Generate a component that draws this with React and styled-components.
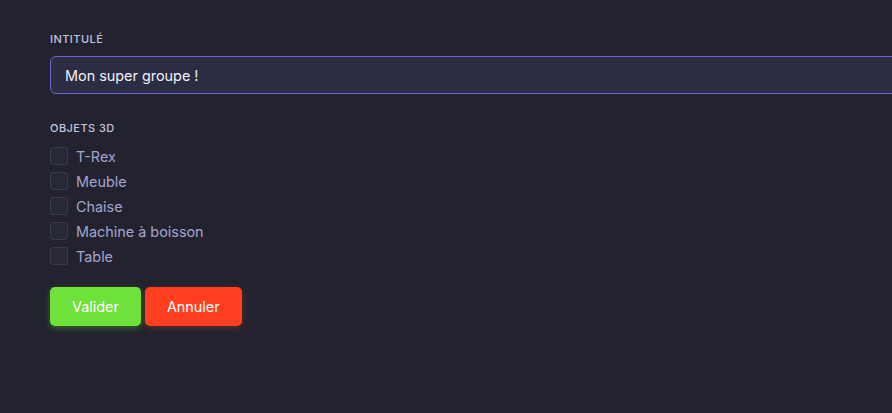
import React, { useState } from "react";
import styled, { createGlobalStyle } from "styled-components";

const GlobalStyle = createGlobalStyle`
  html, body {
    margin: 0;
    padding: 0;
    background: #23232f;
    font-family: Inter, "Noto Sans", sans-serif;
    overflow: hidden;
  }
`;

const Page = styled.div`
  width: 892px;
  height: 413px;
  box-sizing: border-box;
  padding: 32px 0 0 50px;
  overflow: hidden;
`;

const Form = styled.form`
  display: flex;
  flex-direction: column;
`;

const Label = styled.div`
  font-size: 11px;
  font-weight: 500;
  color: #c4c3e0;
  letter-spacing: 0.45px;
  text-transform: uppercase;
  margin-bottom: ${(p) => p.gap || 9}px;
`;

const Input = styled.input`
  width: 870px;
  height: 38px;
  box-sizing: border-box;
  padding: 0 14px;
  background: #2b2d44;
  border: 1px solid #6e66cc;
  border-radius: 6px;
  color: #f1f1f6;
  font-family: inherit;
  font-size: 14.4px;
  outline: none;
  margin-bottom: 27px;
`;

const List = styled.div`
  display: flex;
  flex-direction: column;
  gap: 7px;
  margin-bottom: 22px;
`;

const Row = styled.label`
  display: flex;
  align-items: center;
  gap: 8px;
  height: 18px;
  color: #a4a3cf;
  font-size: 14.4px;
  cursor: pointer;
`;

const Box = styled.span`
  width: 18px;
  height: 18px;
  box-sizing: border-box;
  border: 1px solid #3a3a4f;
  border-radius: 3px;
  background: ${(p) => (p.checked ? "#6e66cc" : "#282837")};
`;

const Buttons = styled.div`
  display: flex;
  gap: 4px;
`;

const Button = styled.button`
  height: 39px;
  padding: 0 ${(p) => p.pad}px;
  border: none;
  border-radius: 5px;
  background: ${(p) => p.bg};
  box-shadow: 0 2px 6px ${(p) => p.glow};
  color: #ffffff;
  font-family: inherit;
  font-size: 14.4px;
  cursor: pointer;
`;

const items = ["T-Rex", "Meuble", "Chaise", "Machine à boisson", "Table"];

export default function App() {
  const [title, setTitle] = useState("Mon super groupe !");
  const [checked, setChecked] = useState({});

  return (
    <Page>
      <GlobalStyle />
      <Form onSubmit={(e) => e.preventDefault()}>
        <Label gap={10}>Intitulé</Label>
        <Input value={title} onChange={(e) => setTitle(e.target.value)} />
        <Label gap={12}>Objets 3D</Label>
        <List>
          {items.map((it) => (
            <Row
              key={it}
              onClick={() => setChecked({ ...checked, [it]: !checked[it] })}
            >
              <Box checked={checked[it]} />
              {it}
            </Row>
          ))}
        </List>
        <Buttons>
          <Button bg="#6ee23a" glow="rgba(110,226,58,0.35)" pad={22}>
            Valider
          </Button>
          <Button bg="#ff3f1f" glow="rgba(255,63,31,0.25)" pad={22}>
            Annuler
          </Button>
        </Buttons>
      </Form>
    </Page>
  );
}
